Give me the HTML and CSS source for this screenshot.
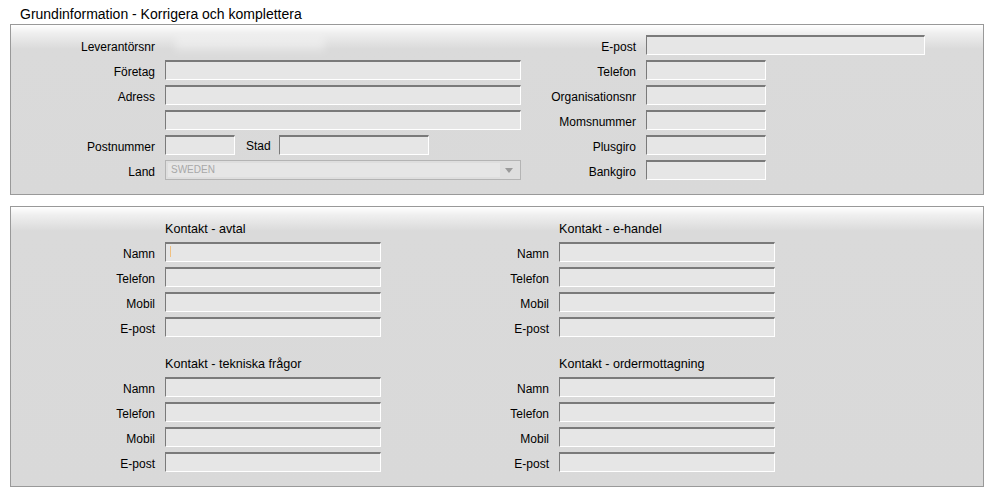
FILE: index.html
```html
<!DOCTYPE html>
<html lang="sv">
<head>
<meta charset="utf-8">
<title>Grundinformation</title>
<link rel="stylesheet" href="styles.css">
</head>
<body>
<div class="title">Grundinformation - Korrigera och komplettera</div>

<section class="panel">
  <div class="grid-main">
    <label class="lbl">Leverantörsnr</label>
    <div class="value"><span class="blurred"></span></div>
    <label class="lbl">E-post</label>
    <input class="field w279" type="text">

    <label class="lbl">Företag</label>
    <input class="field w356" type="text">
    <label class="lbl">Telefon</label>
    <input class="field w120" type="text">

    <label class="lbl">Adress</label>
    <input class="field w356" type="text">
    <label class="lbl">Organisationsnr</label>
    <input class="field w120" type="text">

    <span></span>
    <input class="field w356" type="text">
    <label class="lbl">Momsnummer</label>
    <input class="field w120" type="text">

    <label class="lbl">Postnummer</label>
    <div class="inline">
      <input class="field w70" type="text">
      <label class="lbl-inline">Stad</label>
      <input class="field w150" type="text">
    </div>
    <label class="lbl">Plusgiro</label>
    <input class="field w120" type="text">

    <label class="lbl">Land</label>
    <div class="select">
      <span class="select-text">SWEDEN</span>
      <span class="select-arrow"><svg width="8" height="5" viewBox="0 0 8 5"><path d="M0 0H8L4 5Z" fill="#9a9a9a"/></svg></span>
    </div>
    <label class="lbl">Bankgiro</label>
    <input class="field w120" type="text">
  </div>
</section>

<section class="panel panel-contacts">
  <div class="grid-contact">
    <span></span>
    <div class="heading">Kontakt - avtal</div>
    <span></span>
    <div class="heading">Kontakt - e-handel</div>

    <label class="lbl">Namn</label>
    <div class="caret-wrap"><input class="field w216" type="text"><span class="caret"></span></div>
    <label class="lbl">Namn</label>
    <input class="field w216" type="text">

    <label class="lbl">Telefon</label>
    <input class="field w216" type="text">
    <label class="lbl">Telefon</label>
    <input class="field w216" type="text">

    <label class="lbl">Mobil</label>
    <input class="field w216" type="text">
    <label class="lbl">Mobil</label>
    <input class="field w216" type="text">

    <label class="lbl">E-post</label>
    <input class="field w216" type="text">
    <label class="lbl">E-post</label>
    <input class="field w216" type="text">
  </div>

  <div class="grid-contact second">
    <span></span>
    <div class="heading">Kontakt - tekniska frågor</div>
    <span></span>
    <div class="heading">Kontakt - ordermottagning</div>

    <label class="lbl">Namn</label>
    <input class="field w216" type="text">
    <label class="lbl">Namn</label>
    <input class="field w216" type="text">

    <label class="lbl">Telefon</label>
    <input class="field w216" type="text">
    <label class="lbl">Telefon</label>
    <input class="field w216" type="text">

    <label class="lbl">Mobil</label>
    <input class="field w216" type="text">
    <label class="lbl">Mobil</label>
    <input class="field w216" type="text">

    <label class="lbl">E-post</label>
    <input class="field w216" type="text">
    <label class="lbl">E-post</label>
    <input class="field w216" type="text">
  </div>
</section>
</body>
</html>
```

FILE: styles.css
```css
* { box-sizing: border-box; }

html, body {
  margin: 0;
  padding: 0;
  background: #ffffff;
}

body {
  font-family: "Liberation Sans", Arial, sans-serif;
  font-size: 12px;
  color: #000000;
  width: 994px;
  height: 496px;
  overflow: hidden;
}

.title {
  font-size: 14px;
  line-height: 16px;
  padding: 6px 0 0 20px;
  height: 24px;
  color: #000;
}

.panel {
  margin: 0 10px;
  width: 974px;
  border: 1px solid #999999;
  background: linear-gradient(to bottom, #ffffff 0px, #efefef 8px, #dadada 24px, #d9d9d9 100%);
  padding: 10px 0 14px 0;
}

.panel-contacts {
  margin-top: 11px;
  padding-bottom: 14px;
}

.grid-main {
  display: grid;
  grid-template-columns: 144px 356px 105px 1fr;
  column-gap: 10px;
  grid-auto-rows: 20px;
  row-gap: 5px;
  align-items: center;
}

.grid-contact {
  display: grid;
  grid-template-columns: 144px 216px 158px 216px;
  column-gap: 10px;
  grid-auto-rows: 20px;
  row-gap: 5px;
  align-items: center;
}

.grid-contact.second {
  margin-top: 15px;
}

.lbl {
  text-align: right;
  white-space: nowrap;
  line-height: 20px;
  padding-top: 2px;
  height: 20px;
}

.heading {
  align-self: end;
  line-height: 15px;
  font-size: 12.6px;
  white-space: nowrap;
  padding-top: 1px;
}

.value {
  position: relative;
  height: 20px;
}

.blurred {
  position: absolute;
  left: 10px;
  top: 2px;
  width: 150px;
  height: 14px;
  background: rgba(255, 255, 255, 0.35);
  filter: blur(4px);
}

.field {
  display: block;
  height: 20px;
  margin: 0;
  padding: 0 4px;
  background: #e6e6e6;
  border-style: solid;
  border-width: 2px 1px 1px 1px;
  border-color: #7a7a7a #ffffff #ffffff #7a7a7a;
  font: inherit;
  outline: none;
  -webkit-appearance: none;
  appearance: none;
  border-radius: 0;
}

.w70 { width: 70px; }
.w120 { width: 120px; }
.w150 { width: 150px; }
.w216 { width: 216px; }
.w279 { width: 279px; }
.w356 { width: 356px; }

.inline {
  display: flex;
  align-items: center;
  height: 20px;
}

.lbl-inline {
  margin-left: 11px;
  margin-right: 9px;
  width: 24px;
  white-space: nowrap;
  line-height: 20px;
  padding-top: 2px;
}

.select {
  display: flex;
  align-items: stretch;
  width: 356px;
  height: 20px;
  border: 1px solid #b4b4b4;
  background: #dedede;
  padding: 2px;
}

.select-text {
  flex: 1;
  background: #e6e6e6;
  color: #a8a8a8;
  font-size: 10px;
  line-height: 14px;
  padding-left: 3px;
}

.select-arrow {
  width: 18px;
  display: flex;
  align-items: center;
  justify-content: center;
}

.caret-wrap {
  position: relative;
  height: 20px;
}

.caret {
  position: absolute;
  left: 5px;
  top: 4px;
  width: 1px;
  height: 11px;
  background: #f0c080;
}
```
